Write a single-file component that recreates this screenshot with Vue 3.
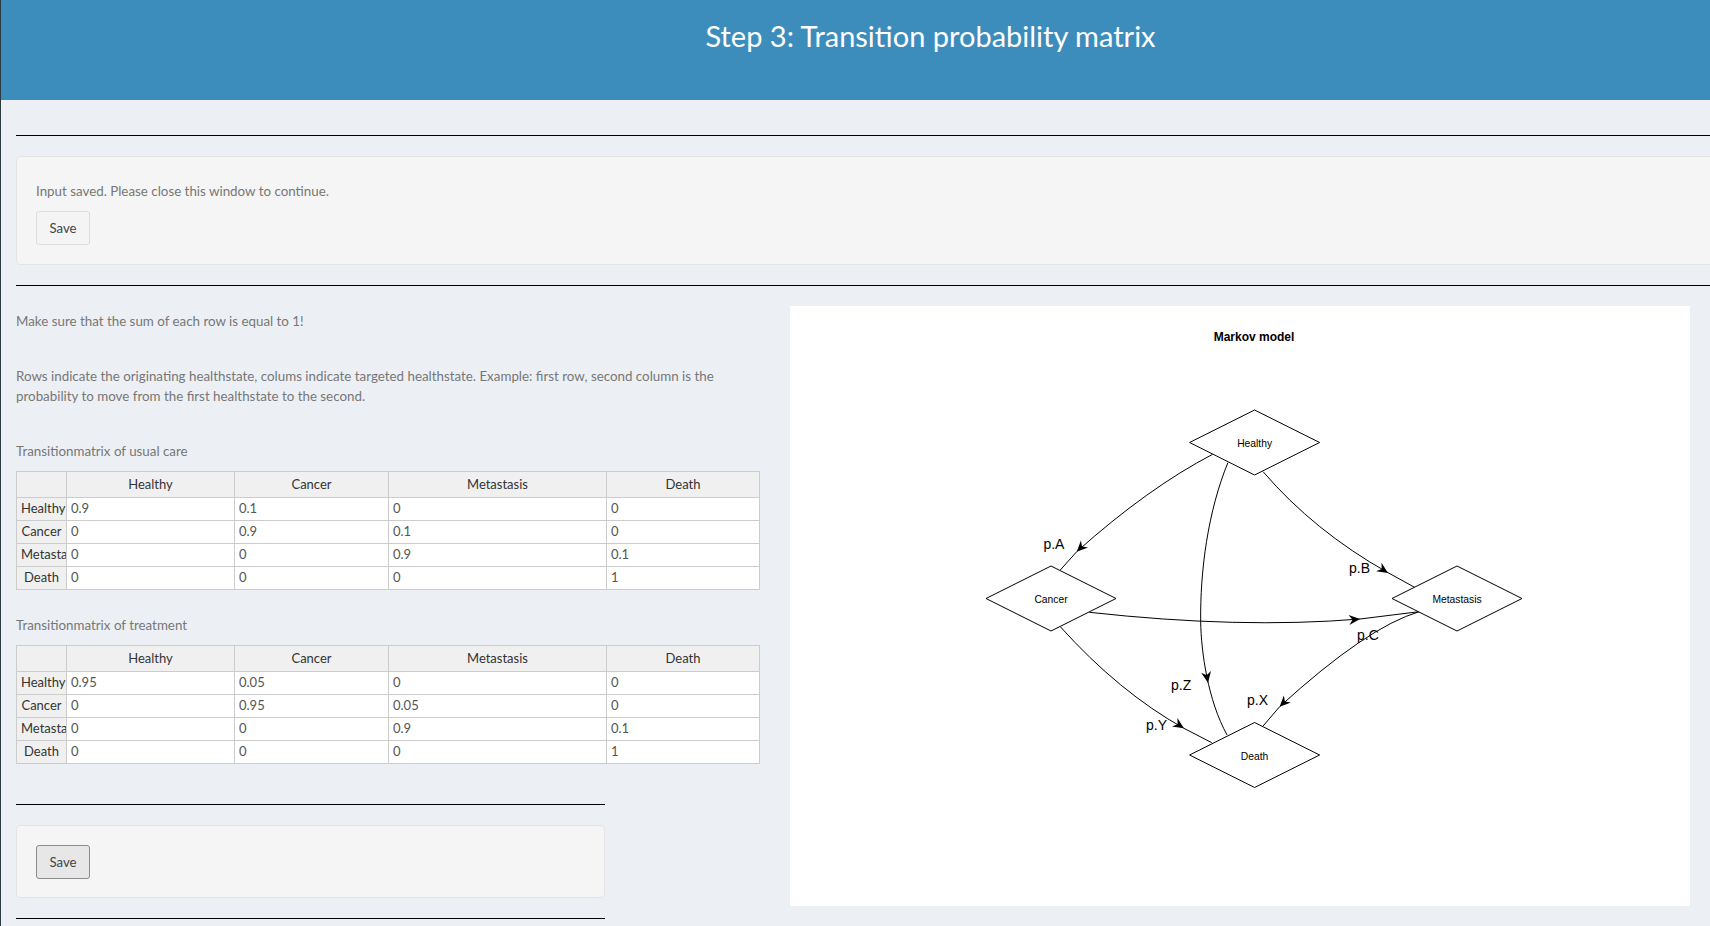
<template>
  <div class="page">
    <header class="top-bar">
      <h1>Step 3: Transition probability matrix</h1>
    </header>

    <main class="content">
      <hr class="rule first" />
      <div class="well status-well">
        <p>Input saved. Please close this window to continue.</p>
        <button class="btn">Save</button>
      </div>
      <hr class="rule second" />

      <div class="columns">
        <section class="left">
          <p class="note">Make sure that the sum of each row is equal to 1!</p>
          <p class="note explain">
            Rows indicate the originating healthstate, colums indicate targeted healthstate. Example: first row, second column is the probability to move from the first healthstate to the second.
          </p>

          <div v-for="m in matrices" :key="m.title" class="matrix">
            <p class="note matrix-title">{{ m.title }}</p>
            <table>
              <colgroup>
                <col class="c0" />
                <col class="c1" />
                <col class="c2" />
                <col class="c3" />
                <col class="c4" />
              </colgroup>
              <thead>
                <tr>
                  <th></th>
                  <th v-for="s in states" :key="s">{{ s }}</th>
                </tr>
              </thead>
              <tbody>
                <tr v-for="(row, i) in m.rows" :key="i">
                  <th>{{ states[i] }}</th>
                  <td v-for="(v, j) in row" :key="j">{{ v }}</td>
                </tr>
              </tbody>
            </table>
          </div>

          <hr class="rule short-top" />
          <div class="well save-well">
            <button class="btn active">Save</button>
          </div>
          <hr class="rule short-bottom" />
        </section>

        <section class="plot">
          <svg width="900" height="600" viewBox="0 0 900 600">
            <text x="464" y="35" class="plot-title" text-anchor="middle">Markov model</text>
            <path v-for="(d, i) in curves" :key="i" :d="d" class="edge" />
            <polygon
              v-for="(a, i) in arrows"
              :key="'a' + i"
              points="0,0 -11,-5 -7.5,0 -11,5"
              :transform="`translate(${a.x} ${a.y}) rotate(${a.r})`"
            />
            <g v-for="n in nodes" :key="n.name">
              <polygon :points="diamond(n)" class="node" />
              <text :x="n.x" :y="n.y + 4.5" class="node-label" text-anchor="middle">{{ n.name }}</text>
            </g>
            <text v-for="l in labels" :key="l.t" :x="l.x" :y="l.y" class="edge-label">{{ l.t }}</text>
          </svg>
        </section>
      </div>
    </main>
  </div>
</template>

<script setup>
const states = ['Healthy', 'Cancer', 'Metastasis', 'Death']

const matrices = [
  {
    title: 'Transitionmatrix of usual care',
    rows: [
      ['0.9', '0.1', '0', '0'],
      ['0', '0.9', '0.1', '0'],
      ['0', '0', '0.9', '0.1'],
      ['0', '0', '0', '1']
    ]
  },
  {
    title: 'Transitionmatrix of treatment',
    rows: [
      ['0.95', '0.05', '0', '0'],
      ['0', '0.95', '0.05', '0'],
      ['0', '0', '0.9', '0.1'],
      ['0', '0', '0', '1']
    ]
  }
]

const nodes = [
  { name: 'Healthy', x: 464.6, y: 136.5 },
  { name: 'Cancer', x: 261, y: 292.5 },
  { name: 'Metastasis', x: 667, y: 292.5 },
  { name: 'Death', x: 464.6, y: 449 }
]

const curves = [
  'M422.6 148.3 Q358 182 286.7 245.7 L270.3 264',
  'M437.9 156.7 C418 205 410 265 410.7 315.7 C411 345 418 395 437.1 429',
  'M473.1 165.7 Q524 225 598 266.7 L624.6 281.3',
  'M299.4 306.3 Q450 323 570 313 L629 305.7',
  'M270.3 320.7 Q329 386 393.9 422.3 L421.8 436.7',
  'M629.2 305.7 Q577 321 489.6 400.7 L473.1 420'
]

const arrows = [
  { x: 286.7, y: 245.7, r: 135 },
  { x: 598, y: 267, r: 33 },
  { x: 570, y: 313, r: -5 },
  { x: 418, y: 376.7, r: 80 },
  { x: 393.9, y: 422.3, r: 33 },
  { x: 489.6, y: 400.7, r: 135 }
]

const labels = [
  { t: 'p.A', x: 253.4, y: 243 },
  { t: 'p.B', x: 559, y: 267 },
  { t: 'p.C', x: 567, y: 334 },
  { t: 'p.Z', x: 381, y: 384 },
  { t: 'p.X', x: 457, y: 399 },
  { t: 'p.Y', x: 356, y: 424 }
]

function diamond(n) {
  return `${n.x - 65},${n.y} ${n.x},${n.y - 32.5} ${n.x + 65},${n.y} ${n.x},${n.y + 32.5}`
}
</script>

<style>
html,
body {
  overflow: hidden;
  background: #ecf0f5;
}
</style>

<style scoped>
.page {
  width: 1860px;
  height: 926px;
  box-sizing: border-box;
  border-left: 1px solid #2c3b41;
  background: #ecf0f5;
  font-family: Lato, "Open Sans", sans-serif;
  font-size: 13.35px;
  color: #777;
}

.top-bar {
  height: 100px;
  background: #3c8dbc;
  text-align: center;
}

.top-bar h1 {
  margin: 0;
  padding-top: 19px;
  font-size: 29px;
  font-weight: 400;
  line-height: 33px;
  color: #fff;
}

.content {
  padding: 0 0 0 15px;
}

.rule {
  margin: 0;
  border: 0;
  border-top: 1px solid #000;
}

.rule.first {
  margin-top: 35px;
}

.well {
  box-sizing: border-box;
  background: #f5f5f5;
  border: 1px solid #e3e3e3;
  border-radius: 4px;
}

.status-well {
  height: 109px;
  margin-top: 20px;
  padding: 24px 19px 0;
}

.status-well p {
  margin: 0 0 10px;
  line-height: 20px;
}

.rule.second {
  margin-top: 20px;
}

.btn {
  display: block;
  box-sizing: border-box;
  width: 54px;
  height: 34px;
  padding: 0;
  border: 1px solid #ddd;
  border-radius: 3px;
  background: #f4f4f4;
  font-family: inherit;
  font-size: 13.2px;
  color: #444;
}

.btn.active {
  background: #e7e7e7;
  border-color: #8c8c8c;
}

.columns {
  display: flex;
  align-items: flex-start;
}

.left {
  width: 744px;
  flex: none;
}

.note {
  margin: 0;
  line-height: 20px;
}

.left > .note:first-child {
  margin-top: 25px;
}

.explain {
  width: 720px;
  margin-top: 35px;
}

.matrix-title {
  margin-top: 35px;
  margin-bottom: 10px;
}

.matrix + .matrix .matrix-title {
  margin-top: 25px;
}

table {
  width: 743px;
  table-layout: fixed;
  border-collapse: collapse;
  font-size: 13px;
  color: #555;
}

.c0 { width: 50px; }
.c1 { width: 168px; }
.c2 { width: 154px; }
.c3 { width: 218px; }
.c4 { width: 153px; }

th,
td {
  box-sizing: border-box;
  height: 23px;
  padding: 0 4px 2px;
  border: 1px solid #ccc;
  overflow: hidden;
  white-space: nowrap;
  background: #fff;
  line-height: 20px;
}

th {
  background: #f0f0f0;
  color: #333;
  font-weight: 400;
  text-align: center;
}

thead th {
  height: 26px;
}

.rule.short-top {
  width: 589px;
  margin-top: 40px;
}

.save-well {
  width: 589px;
  height: 73px;
  margin-top: 20px;
  padding: 19px;
}

.rule.short-bottom {
  width: 589px;
  margin-top: 20px;
}

.plot {
  margin: 20px 0 0 30px;
  background: #fff;
  width: 900px;
  height: 600px;
  flex: none;
}

.plot svg {
  display: block;
}

.plot-title {
  font-family: "Liberation Sans", Arial, sans-serif;
  font-size: 12px;
  font-weight: 700;
  fill: #000;
}

.edge {
  fill: none;
  stroke: #000;
  stroke-width: 1;
}

.node {
  fill: #fff;
  stroke: #000;
  stroke-width: 1;
}

.node-label {
  font-family: "Liberation Sans", Arial, sans-serif;
  font-size: 10.3px;
  fill: #000;
}

.edge-label {
  font-family: "Liberation Sans", Arial, sans-serif;
  font-size: 14px;
  fill: #000;
}
</style>
